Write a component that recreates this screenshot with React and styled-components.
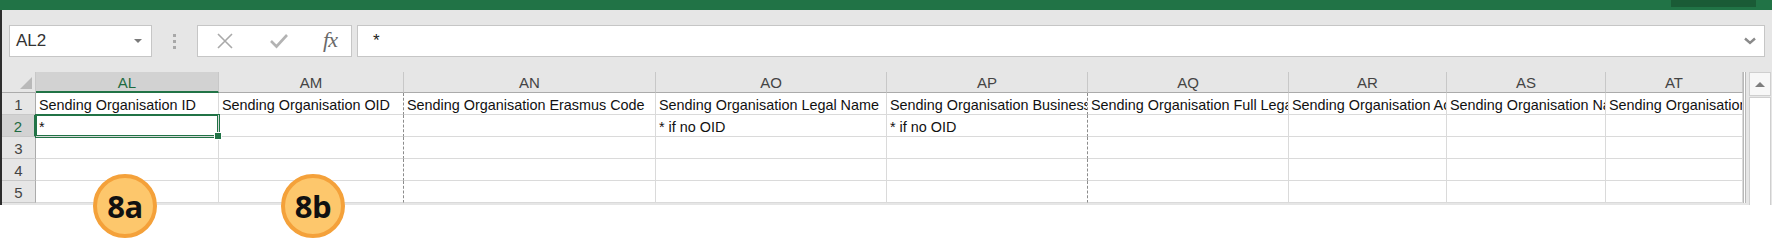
import React from "react";
import styled, { createGlobalStyle } from "styled-components";

const GlobalStyle = createGlobalStyle`
  html, body {
    margin: 0;
    padding: 0;
    background: #fff;
  }
  body {
    font-family: "Liberation Sans", Arial, sans-serif;
  }
`;

const Page = styled.div`
  position: relative;
  width: 1772px;
  height: 246px;
  overflow: hidden;
  background: #fff;
`;

const TitleBar = styled.div`
  height: 10px;
  background: #217346;
  display: flex;
  justify-content: flex-end;
  padding-right: 16px;
`;

const TitleBlock = styled.div`
  width: 85px;
  height: 7px;
  background: #1a5b36;
`;

const Toolbar = styled.div`
  height: 62px;
  box-sizing: border-box;
  padding: 15px 7px 0 7px;
  border-left: 2px solid #2d2d2d;
  background: #e6e6e6;
  display: flex;
  align-items: flex-start;
`;

const Box = styled.div`
  height: 32px;
  box-sizing: border-box;
  background: #fff;
  border: 1px solid #c6c6c6;
  display: flex;
  align-items: center;
`;

const NameBox = styled(Box)`
  width: 143px;
  padding: 0 9px 0 6px;
  justify-content: space-between;
  font-size: 17px;
  color: #333;
`;

const Caret = styled.span`
  width: 0;
  height: 0;
  border-left: 4px solid transparent;
  border-right: 4px solid transparent;
  border-top: 4px solid #7a7a7a;
`;

const Grip = styled.div`
  width: 45px;
  height: 32px;
  display: flex;
  flex-direction: column;
  align-items: center;
  justify-content: center;
  gap: 3px;
  & > span {
    width: 3px;
    height: 3px;
    background: #a8a8a8;
  }
`;

const FxButtons = styled(Box)`
  width: 155px;
  padding: 0 14px 0 18px;
  justify-content: space-between;
`;

const FxLabel = styled.span`
  font-family: "Liberation Serif", "Times New Roman", serif;
  font-style: italic;
  font-size: 22px;
  color: #6a6a6a;
  letter-spacing: -1px;
  margin-top: -2px;
`;

const FormulaInput = styled(Box)`
  margin-left: 5px;
  flex: 1;
  padding: 0 8px 0 15px;
  justify-content: space-between;
  font-size: 17px;
  color: #222;
`;

const SheetArea = styled.div`
  height: 133px;
  box-sizing: border-box;
  border-left: 2px solid #2d2d2d;
  background: #e6e6e6;
  display: flex;
  align-items: flex-start;
`;

const Grid = styled.div`
  display: grid;
  grid-template-columns: ${({ $cols }) => $cols};
  grid-template-rows: 21px repeat(5, 22px);
  border-right: 3px double #b8b8b8;
  background: #fff;
  font-size: 14.4px;
`;

const Corner = styled.div`
  position: relative;
  background: #e6e6e6;
  border-right: 1px solid #c8c8c8;
  border-bottom: 1px solid #ababab;
  &::after {
    content: "";
    position: absolute;
    right: 3px;
    bottom: 3px;
    width: 0;
    height: 0;
    border-left: 12px solid transparent;
    border-bottom: 12px solid #b9b9b9;
  }
`;

const ColHeader = styled.div`
  box-sizing: border-box;
  background: ${({ $active }) => ($active ? "#d2d2d2" : "#e6e6e6")};
  color: ${({ $active }) => ($active ? "#1e6b41" : "#444")};
  border-right: 1px solid #c8c8c8;
  border-bottom: ${({ $active }) => ($active ? "2px solid #217346" : "1px solid #ababab")};
  text-align: center;
  line-height: 21px;
  font-size: 15px;
  overflow: hidden;
`;

const RowHeader = styled.div`
  box-sizing: border-box;
  background: ${({ $active }) => ($active ? "#d2d2d2" : "#e6e6e6")};
  color: ${({ $active }) => ($active ? "#1e6b41" : "#444")};
  border-bottom: 1px solid #c8c8c8;
  border-right: ${({ $active }) => ($active ? "2px solid #217346" : "1px solid #ababab")};
  text-align: center;
  line-height: 24px;
  font-size: 15px;
`;

const Cell = styled.div`
  position: relative;
  box-sizing: border-box;
  min-width: 0;
  padding-left: 3px;
  white-space: nowrap;
  overflow: ${({ $selected }) => ($selected ? "visible" : "hidden")};
  line-height: 25px;
  color: #111;
  border-bottom: 1px solid #dadada;
  border-right: ${({ $dashed }) => ($dashed ? "1px dashed #8c8c8c" : "1px solid #dadada")};
  z-index: ${({ $selected }) => ($selected ? 2 : 0)};
  box-shadow: ${({ $selected }) => ($selected ? "0 0 0 1px #217346, inset 0 0 0 1px #217346" : "none")};
`;

const FillHandle = styled.span`
  position: absolute;
  right: -4px;
  bottom: -4px;
  width: 6px;
  height: 6px;
  background: #217346;
  border: 1px solid #fff;
`;

const Scrollbar = styled.div`
  width: 22px;
  height: 133px;
  margin-left: 3px;
  display: flex;
  flex-direction: column;
`;

const ScrollButton = styled.div`
  height: 24px;
  box-sizing: border-box;
  background: #f7f7f7;
  border: 1px solid #cfcfcf;
  display: flex;
  align-items: center;
  justify-content: center;
  &::before {
    content: "";
    width: 0;
    height: 0;
    border-left: 5px solid transparent;
    border-right: 5px solid transparent;
    border-bottom: 5px solid #7d7d7d;
  }
`;

const ScrollThumb = styled.div`
  flex: 1;
  margin-top: 1px;
  background: #fff;
  border: 1px solid #cfcfcf;
  border-bottom: none;
`;

const Badge = styled.div`
  position: absolute;
  top: 174px;
  left: ${({ $x }) => $x}px;
  width: 64px;
  height: 64px;
  box-sizing: border-box;
  border-radius: 50%;
  border: 4px solid #f4a13a;
  background: #fdc76c;
  display: flex;
  align-items: center;
  justify-content: center;
  font-family: "Open Sans", "Liberation Sans", sans-serif;
  font-weight: 700;
  font-size: 31px;
  color: #111;
  letter-spacing: -0.5px;
`;

const columns = [
  { id: "AL", width: 183, head: "Sending Organisation ID", value: "*" },
  { id: "AM", width: 185, head: "Sending Organisation OID", value: "", dashed: true },
  { id: "AN", width: 252, head: "Sending Organisation Erasmus Code", value: "" },
  { id: "AO", width: 231, head: "Sending Organisation Legal Name", value: "* if no OID" },
  { id: "AP", width: 201, head: "Sending Organisation Business Name", value: "* if no OID", dashed: true },
  { id: "AQ", width: 201, head: "Sending Organisation Full Legal Name", value: "" },
  { id: "AR", width: 158, head: "Sending Organisation Acronym", value: "" },
  { id: "AS", width: 159, head: "Sending Organisation National ID", value: "" },
  { id: "AT", width: 137, head: "Sending Organisation Type", value: "" },
];

const rows = [1, 2, 3, 4, 5];

function CrossIcon() {
  return (
    <svg width="18" height="18" viewBox="0 0 18 18">
      <path d="M2 2 L16 16 M16 2 L2 16" stroke="#a9a9a9" strokeWidth="1.6" fill="none" />
    </svg>
  );
}

function CheckIcon() {
  return (
    <svg width="20" height="18" viewBox="0 0 20 18">
      <path d="M2 9 L7.5 14.5 L18 3" stroke="#b3b3b3" strokeWidth="2.6" fill="none" />
    </svg>
  );
}

function Chevron() {
  return (
    <svg width="12" height="8" viewBox="0 0 12 8">
      <path d="M1 1.5 L6 6 L11 1.5" stroke="#8a8a8a" strokeWidth="2.4" fill="none" />
    </svg>
  );
}

function cellText(col, row) {
  if (row === 1) return col.head;
  if (row === 2) return col.value;
  return "";
}

export default function App() {
  const template = ["34px", ...columns.map((c) => `${c.width}px`)].join(" ");

  return (
    <Page>
      <GlobalStyle />
      <TitleBar>
        <TitleBlock />
      </TitleBar>
      <Toolbar>
        <NameBox>
          <span>AL2</span>
          <Caret />
        </NameBox>
        <Grip>
          <span />
          <span />
          <span />
        </Grip>
        <FxButtons>
          <CrossIcon />
          <CheckIcon />
          <FxLabel>fx</FxLabel>
        </FxButtons>
        <FormulaInput>
          <span>*</span>
          <Chevron />
        </FormulaInput>
      </Toolbar>
      <SheetArea>
        <Grid $cols={template}>
          <Corner />
          {columns.map((c) => (
            <ColHeader key={c.id} $active={c.id === "AL"}>
              {c.id}
            </ColHeader>
          ))}
          {rows.map((r) => (
            <React.Fragment key={r}>
              <RowHeader $active={r === 2}>{r}</RowHeader>
              {columns.map((c) => {
                const selected = c.id === "AL" && r === 2;
                return (
                  <Cell key={c.id} $dashed={c.dashed} $selected={selected}>
                    {cellText(c, r)}
                    {selected && <FillHandle />}
                  </Cell>
                );
              })}
            </React.Fragment>
          ))}
        </Grid>
        <Scrollbar>
          <ScrollButton />
          <ScrollThumb />
        </Scrollbar>
      </SheetArea>
      <Badge $x={93}>8a</Badge>
      <Badge $x={281}>8b</Badge>
    </Page>
  );
}
